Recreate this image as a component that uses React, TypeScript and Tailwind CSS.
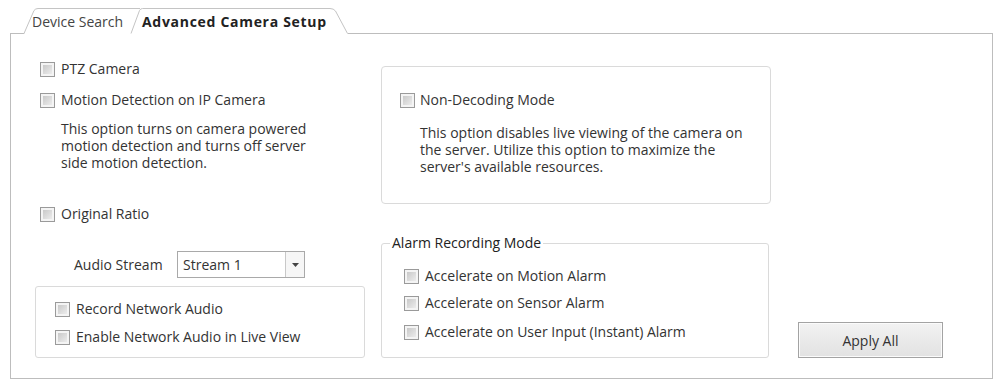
import React from "react";

const font = { fontFamily: '"Open Sans", "Noto Sans", sans-serif' };

function Box() {
  return (
    <span className="inline-flex h-[15px] w-[15px] shrink-0 border border-[#9a9a9a] bg-[#f4f4f4] p-[2px]">
      <span className="block h-full w-full bg-gradient-to-br from-[#c9c9c9] to-[#ececec]" />
    </span>
  );
}

function Check({ label, gap = "gap-[6px]" }: { label: string; gap?: string }) {
  return (
    <div className={`flex h-[16px] items-center ${gap}`}>
      <Box />
      <span className="leading-none">{label}</span>
    </div>
  );
}

function Lines({ lines, className }: { lines: string[]; className: string }) {
  return (
    <div className={className}>
      {lines.map((l) => (
        <div key={l} className="h-[17px] overflow-visible leading-[17px]">
          {l}
        </div>
      ))}
    </div>
  );
}

export default function App() {
  return (
    <div
      className="h-[382px] w-[995px] overflow-hidden bg-white text-[14px] text-[#333333]"
      style={font}
    >
      {/* tab strip */}
      <div className="relative z-10 -mb-px h-[34px]">
        <svg
          className="absolute inset-0"
          width="995"
          height="34"
          viewBox="0 0 995 34"
        >
          <path d="M24,34 L34,10 Q35.5,8 38,8 L150,8 L150,34 Z" fill="#ffffff" />
          <path
            d="M24,33.5 L34,10.5 Q35.5,8.5 38,8.5 L140,8.5"
            fill="none"
            stroke="#c4c4c4"
          />
          <path
            d="M131,34 L139.5,10 Q140.5,8 142.5,8 L330,8 Q334,8 336,11 L348,34 Z"
            fill="#ffffff"
          />
          <path
            d="M131,33.5 L139.5,10.5 Q140.5,8.5 142.5,8.5 L330,8.5 Q333.5,8.5 335.5,11 L347.5,33.5"
            fill="none"
            stroke="#c4c4c4"
          />
        </svg>
        <div className="relative flex h-full items-center pl-[32px] pt-[9px]">
          <span className="w-[110px] text-[#444444]">Device Search</span>
          <span className="font-bold tracking-[0.7px] text-[#222222]">
            Advanced Camera Setup
          </span>
        </div>
      </div>

      {/* panel */}
      <div className="ml-[10px] flex h-[346px] w-[983px] border border-[#bdbdbd] pb-[20px]">
        {/* left column */}
        <div className="ml-[24px] flex w-[330px] flex-col pt-[27px]">
          <div className="pl-[5px]">
            <Check label="PTZ Camera" />
          </div>
          <div className="mt-[15px] pl-[5px]">
            <Check label="Motion Detection on IP Camera" />
          </div>
          <Lines
            className="mt-[12px] pl-[26px]"
            lines={[
              "This option turns on camera powered",
              "motion detection and turns off server",
              "side motion detection.",
            ]}
          />
          <div className="mt-[35px] pl-[5px]">
            <Check label="Original Ratio" />
          </div>
          <div className="mt-[29px] flex items-center pl-[39px]">
            <span className="w-[103px]">Audio Stream</span>
            <div className="flex h-[27px] w-[128px] border border-[#a9a9a9] bg-white">
              <span className="flex flex-1 items-center pl-[5px]">Stream 1</span>
              <span className="flex w-[19px] items-center justify-center border-l border-[#c8c8c8] bg-[#f6f6f6]">
                <svg width="7" height="4" viewBox="0 0 7 4">
                  <path d="M0,0 H7 L3.5,4 Z" fill="#444444" />
                </svg>
              </span>
            </div>
          </div>
          <div className="mt-[8px] flex h-[72px] flex-col gap-[12px] rounded-[3px] border border-[#dadada] pl-[19px] pt-[14px]">
            <Check label="Record Network Audio" />
            <Check label="Enable Network Audio in Live View" />
          </div>
        </div>

        {/* middle column */}
        <div className="ml-[16px] flex w-[390px] flex-col pt-[32px]">
          <div className="flex h-[138px] flex-col rounded-[4px] border border-[#dadada] pl-[18px] pt-[25px]">
            <Check label="Non-Decoding Mode" gap="gap-[5px]" />
            <Lines
              className="mt-[16px] pl-[20px]"
              lines={[
                "This option disables live viewing of the camera on",
                "the server. Utilize this option to maximize the",
                "server's available resources.",
              ]}
            />
          </div>
          <fieldset className="mt-[31px] h-[123px] w-[388px] rounded-[3px] border border-[#dadada] p-0">
            <legend className="ml-[8px] px-[2px] leading-[16px] text-[#222222]">
              Alarm Recording Mode
            </legend>
            <div className="flex flex-col gap-[11px] pl-[22px] pt-[17px]">
              <Check label="Accelerate on Motion Alarm" />
              <Check label="Accelerate on Sensor Alarm" />
              <div className="mt-[2px]">
                <Check label="Accelerate on User Input (Instant) Alarm" />
              </div>
            </div>
          </fieldset>
        </div>

        {/* right column */}
        <div className="ml-[27px] flex flex-col justify-end">
          <button className="h-[36px] w-[145px] border border-[#a3a3a3] bg-gradient-to-b from-[#f2f2f2] to-[#e2e2e2] text-[14px] text-[#333333] shadow-[inset_0_0_0_1px_#fbfbfb]">
            Apply All
          </button>
        </div>
      </div>
    </div>
  );
}
